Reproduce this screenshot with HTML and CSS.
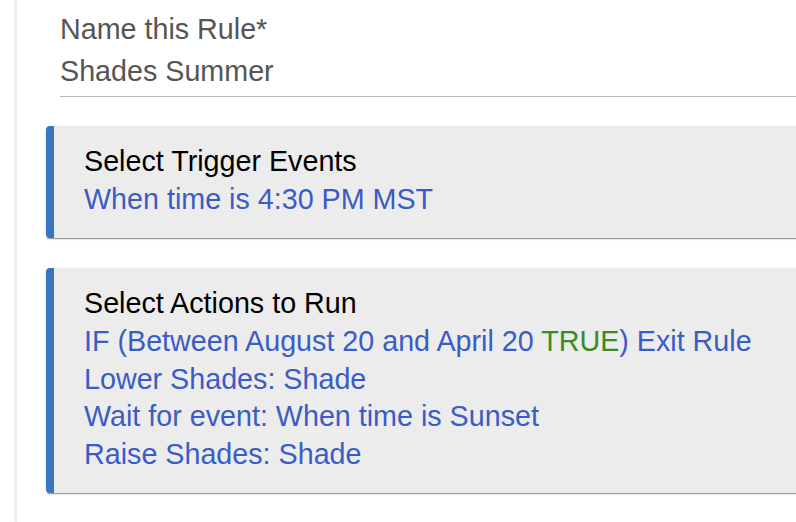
FILE: index.html
```html
<!DOCTYPE html>
<html>
<head>
<meta charset="utf-8">
<link rel="stylesheet" href="styles.css">
</head>
<body>
<div class="panel">
  <div class="field">
    <div class="field-label">Name this Rule*</div>
    <div class="field-value">Shades Summer</div>
  </div>
  <div class="card card-trigger">
    <div class="card-title">Select Trigger Events</div>
    <div class="card-line">When time is 4:30 PM MST</div>
  </div>
  <div class="card card-actions">
    <div class="card-title">Select Actions to Run</div>
    <div class="card-line">IF (Between August 20 and April 20 <span class="ok">TRUE</span>) Exit Rule</div>
    <div class="card-line">Lower Shades: Shade</div>
    <div class="card-line">Wait for event: When time is Sunset</div>
    <div class="card-line">Raise Shades: Shade</div>
  </div>
</div>
</body>
</html>
```
FILE: styles.css
```css
html, body {
  margin: 0;
  padding: 0;
  background: #ffffff;
  overflow: hidden;
}
body {
  font-family: "Liberation Sans", Arial, sans-serif;
  font-size: 28.7px;
  line-height: 37.6px;
  width: 796px;
  height: 522px;
}
.panel {
  margin-left: 16px;
  height: 522px;
  padding: 11px 0 0 29px;
  box-sizing: border-box;
  box-shadow: -1px 0 2px rgba(0, 0, 0, 0.12);
  border-left: 1px solid #ececec;
}
.field {
  margin-left: 14px;
  border-bottom: 1.5px solid #b8b8b8;
  padding-bottom: 6px;
  margin-bottom: 28.5px;
  color: #555555;
}
.field-value {
  margin-top: 4px;
}
.card {
  background: #ececec;
  border-left: 8px solid #3a75c4;
  border-radius: 4px 0 0 4px;
  padding: 17.5px 0 19.5px 30px;
  box-shadow: 0 2px 1px -1px rgba(0, 0, 0, 0.25), 0 1px 1px 0 rgba(0, 0, 0, 0.14), 0 1px 3px 0 rgba(0, 0, 0, 0.12);
  margin-right: -20px;
}
.card-trigger {
  margin-bottom: 30px;
}
.card-title {
  color: #000000;
}
.card-line {
  color: #3a5cc6;
  white-space: nowrap;
}
.ok {
  color: #3b8a24;
}
```
